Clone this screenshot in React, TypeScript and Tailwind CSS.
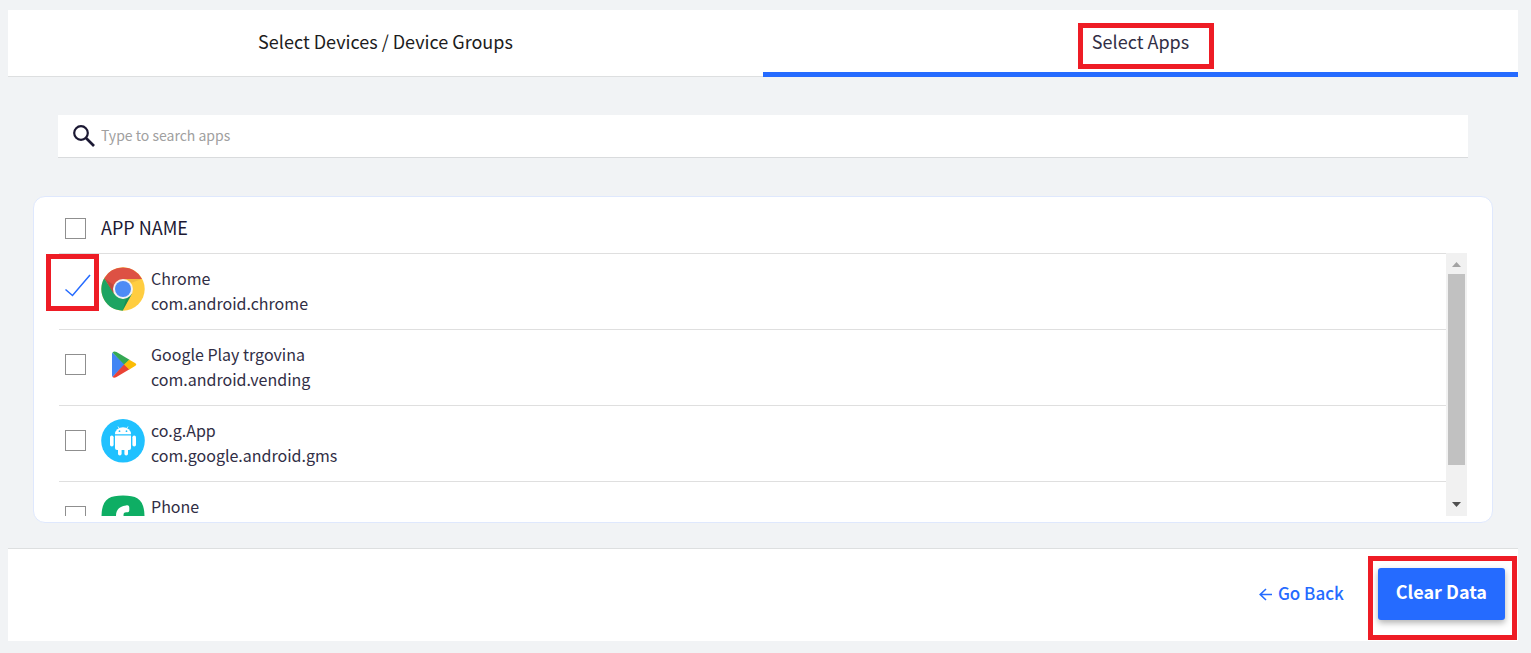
import { useState } from "react";
import type { ReactNode } from "react";
import clsx from "clsx";

interface AppEntry {
  name: string;
  packageName: string;
  icon: ReactNode;
}

function ChromeIcon() {
  return (
    <svg viewBox="0 0 44 44" className="size-11" aria-hidden="true">
      <circle cx="22" cy="22" r="21.7" fill="#ffcd40" />
      <path d="M3.2 11.2A21.7 21.7 0 0 1 41 12H22L13 27Z" fill="#dd5144" />
      <path d="M3.2 11.2 13.2 27 22 32 30.8 27 21.6 43.7A21.7 21.7 0 0 1 3.2 11.2Z" fill="#1da462" />
      <path d="M22 12h19l-14 5z" fill="#e5a93a" opacity="0.5" />
      <path d="M3.2 11.2 12 26l2-7z" fill="#8c3a35" opacity="0.35" />
      <path d="M30.8 27 21.6 43.7 25 32z" fill="#0f713f" opacity="0.4" />
      <circle cx="22" cy="22" r="10" fill="#f1f1f1" />
      <circle cx="22" cy="22" r="8" fill="#4c8bf5" />
    </svg>
  );
}

function PlayIcon() {
  return (
    <svg viewBox="0 0 44 44" className="size-11" aria-hidden="true">
      <path d="M11.5 9.5Q11 10 11 11V32Q11 33 11.5 34L24 21.5Z" fill="#4285f4" />
      <path d="M11.5 9.500Q13 7.800 15.500 9L28.500 16.800 23.500 22Z" fill="#34a853" />
      <path d="M11.500 34Q13 35.500 15.500 34L28.500 26.200 23.500 21Z" fill="#ea4335" />
      <path d="M28.300 16.700 34 20Q36.500 21.500 34 23.100L28.300 26.400 23 21.500Z" fill="#fbbc04" />
    </svg>
  );
}

function AndroidIcon() {
  return (
    <svg viewBox="0 0 44 44" className="size-11" aria-hidden="true">
      <circle cx="22" cy="21.800" r="21.800" fill="#20c1ff" />
      <g fill="#fff">
        <path d="M14 15.200a8 7 0 0 1 16 0z" />
        <path d="M14 16.500h16V29a2 2 0 0 1-2 2H16a2 2 0 0 1-2-2z" />
        <rect x="9" y="16.500" width="3.600" height="11" rx="1.800" />
        <rect x="31.400" y="16.500" width="3.600" height="11" rx="1.800" />
        <rect x="17" y="28" width="3.600" height="8.500" rx="1.800" />
        <rect x="23.400" y="28" width="3.600" height="8.500" rx="1.800" />
      </g>
      <path d="m17 7.500 1.500 2.500M27 7.500 25.500 10" stroke="#fff" strokeWidth="0.8" />
      <circle cx="18.500" cy="12.200" r="0.900" fill="#20c1ff" />
      <circle cx="25.500" cy="12.200" r="0.900" fill="#20c1ff" />
    </svg>
  );
}

function PhoneIcon() {
  return (
    <svg viewBox="0 0 44 44" className="size-11" aria-hidden="true">
      <path
        d="M22 0.500C37 0.500 43.500 5 43.500 22S37 43.500 22 43.500 0.500 39 0.500 22 7 0.500 22 0.500Z"
        fill="#0eae64"
      />
      <path
        d="M25 10.500c2.500-.6 3.300.4 3.300 2.200v2.500c0 1.800-1 2.100-3 2.100-2.300 0-2.800 1-2.800 3.200 0 5 2.500 6 5 6 2 0 3 1 3 2.500 0 3-1 4-3.500 4-7 0-12-5-12-12.500 0-6 4-9.500 10-10z"
        fill="#fff"
      />
    </svg>
  );
}

const APPS: AppEntry[] = [
  { name: "Chrome", packageName: "com.android.chrome", icon: <ChromeIcon /> },
  { name: "Google Play trgovina", packageName: "com.android.vending", icon: <PlayIcon /> },
  { name: "co.g.App", packageName: "com.google.android.gms", icon: <AndroidIcon /> },
  { name: "Phone", packageName: "com.samsung.android.dialer", icon: <PhoneIcon /> },
];

interface CheckboxProps {
  label: string;
  checked: boolean;
  onChange: () => void;
  highlighted?: boolean;
}

function Checkbox({ label, checked, onChange, highlighted }: CheckboxProps) {
  return (
    <span className="relative flex size-[21px] shrink-0">
      <input
        type="checkbox"
        aria-label={label}
        checked={checked}
        onChange={onChange}
        className="size-full appearance-none border border-[#8f8f8f] bg-white checked:border-transparent"
      />
      {checked && (
        <svg
          viewBox="0 0 27 24"
          className="pointer-events-none absolute -top-1 left-0 h-6 w-[27px]"
          aria-hidden="true"
        >
          <path d="M0.500 15.500 7.500 21.500 25 1" fill="none" stroke="#256bff" strokeWidth="1.500" />
        </svg>
      )}
      {highlighted && (
        <span className="pointer-events-none absolute -top-6 -left-[19px] h-[57px] w-[53px] border-5 border-[#ee1c25]" />
      )}
    </span>
  );
}

export default function App() {
  const [query, setQuery] = useState("");
  const [activeTab, setActiveTab] = useState("apps");
  const [selected, setSelected] = useState<string[]>(["com.android.chrome"]);

  const visibleApps = APPS.filter((app) => app.name.toLowerCase().includes(query.toLowerCase()));

  function toggle(packageName: string) {
    setSelected((prev) =>
      prev.includes(packageName)
        ? prev.filter((item) => item !== packageName)
        : [...prev, packageName],
    );
  }

  function toggleAll() {
    setSelected(selected.length === APPS.length ? [] : APPS.map((app) => app.packageName));
  }

  return (
    <div className="min-h-screen bg-[#f1f3f5] pt-2.5 pr-[13px] pb-3 pl-2 font-['Noto_Sans_CJK_SC','Noto_Sans',sans-serif] text-[#312e45]">
      <div role="tablist" className="flex bg-white">
        <button
          type="button"
          role="tab"
          aria-selected={activeTab === "devices"}
          onClick={() => setActiveTab("devices")}
          className={clsx(
            "flex h-[67px] flex-1 items-center justify-center text-lg leading-6 text-[#1c1c20]",
            activeTab === "devices"
              ? "border-b-5 border-[#256bff]"
              : "border-b border-[#dddfe0] pb-1",
          )}
        >
          Select Devices / Device Groups
        </button>
        <button
          type="button"
          role="tab"
          aria-selected={activeTab === "apps"}
          onClick={() => setActiveTab("apps")}
          className={clsx(
            "flex h-[67px] flex-1 items-center justify-center text-lg leading-6",
            activeTab === "apps"
              ? "border-b-5 border-[#256bff]"
              : "border-b border-[#dddfe0] pb-1",
          )}
        >
          <span className="relative">
            Select Apps
            <span className="pointer-events-none absolute -top-1.5 -right-[25px] -left-3.5 h-[46px] border-5 border-[#ee1c25]" />
          </span>
        </button>
      </div>

      <label className="mx-[50px] mt-[38px] flex h-[43px] items-center border-b border-[#d9dbdd] bg-white pl-[15px]">
        <svg viewBox="0 0 22 22" className="size-[22px] shrink-0" aria-hidden="true">
          <circle cx="8" cy="8" r="6.800" fill="none" stroke="#1b1833" strokeWidth="2.200" />
          <path d="m13 13 8 8" stroke="#1b1833" strokeWidth="2.600" />
        </svg>
        <input
          type="text"
          aria-label="Search apps"
          placeholder="Type to search apps"
          value={query}
          onChange={(e) => setQuery(e.target.value)}
          className="h-full min-w-0 flex-1 px-1.5 pb-[3px] text-sm outline-none placeholder:text-[#a0a0a0]"
        />
      </label>

      <section className="mx-[25px] mt-[38px] flex rounded-xl border border-[#dfe8fd] bg-white px-[25px] pb-1.5">
        <table className="block min-w-0 flex-1">
          <thead className="block">
            <tr className="flex h-[57px] items-center gap-[15px] border-b border-[#dfdfdf] pt-1.5 pl-1.5">
              <td>
                <Checkbox
                  label="Select all apps"
                  checked={selected.length === APPS.length}
                  onChange={toggleAll}
                />
              </td>
              <th scope="col" className="pb-[3px] text-lg leading-6 font-normal text-[#1b1833]">
                APP NAME
              </th>
            </tr>
          </thead>
          <tbody className="-ml-3.5 block h-[262px] overflow-y-auto pl-3.5 [scrollbar-width:none]">
            {visibleApps.map((app, index) => (
              <tr
                key={app.packageName}
                className="flex h-[76px] items-start border-b border-[#dfdfdf] pt-3 pl-1.5"
              >
                <td className="pt-3">
                  <Checkbox
                    label={`Select ${app.name}`}
                    checked={selected.includes(app.packageName)}
                    onChange={() => toggle(app.packageName)}
                    highlighted={index === 0}
                  />
                </td>
                <td className="flex gap-1.5 pl-[15px]">
                  <span className="pt-px">{app.icon}</span>
                  <span className="text-base leading-[25px]">
                    <span className="block">{app.name}</span>
                    <span className="block">{app.packageName}</span>
                  </span>
                </td>
              </tr>
            ))}
          </tbody>
        </table>

        <div
          className="mt-14 flex w-[21px] flex-col items-center bg-[#f1f1f1]"
          aria-hidden="true"
        >
          <svg viewBox="0 0 21 21" className="size-[21px] shrink-0">
            <path d="M6 14h9L10.500 9z" fill="#a3a3a3" />
          </svg>
          <div className="h-[191px] w-[17px] bg-[#c1c1c1]" />
          <svg viewBox="0 0 21 21" className="mt-auto size-[21px] shrink-0">
            <path d="M6 7h9l-4.500 5z" fill="#505050" />
          </svg>
        </div>
      </section>

      <footer className="mt-[25px] flex h-[93px] items-center justify-end gap-[34px] border-t border-[#dddfe0] bg-white pr-[13px] pb-0.5">
        <button
          type="button"
          className="flex items-center gap-1.5 pb-0.5 text-[17px] leading-6 font-medium text-[#256bff]"
        >
          <svg viewBox="0 0 13 13" className="mt-0.5 size-[13px]" aria-hidden="true">
            <path d="M7 1 1.200 6.500 7 12M1.200 6.500H13" fill="none" stroke="#256bff" strokeWidth="1.600" />
          </svg>
          Go Back
        </button>
        <span className="relative flex">
          <button
            type="button"
            className="h-[52px] rounded-[3px] bg-[#256bff] px-[18px] pb-1.5 text-lg leading-6 font-bold text-white shadow-[0_3px_6px_rgba(0,0,0,0.3)]"
          >
            Clear Data
          </button>
          <span className="pointer-events-none absolute -top-3 -right-3 -bottom-5 -left-2.5 border-5 border-[#ee1c25]" />
        </span>
      </footer>
    </div>
  );
}
